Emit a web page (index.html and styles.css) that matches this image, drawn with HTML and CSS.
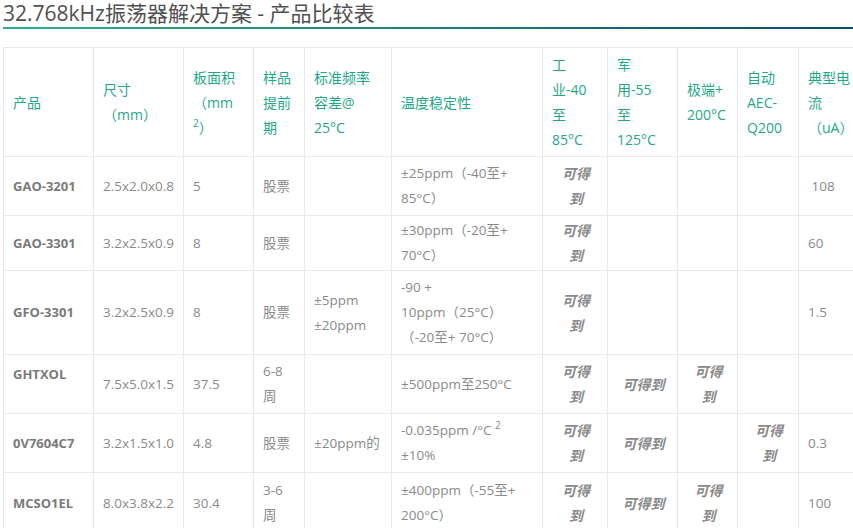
FILE: index.html
```html
<!DOCTYPE html>
<html lang="zh">
<head>
<meta charset="utf-8">
<title>32.768kHz振荡器解决方案 - 产品比较表</title>
<link rel="stylesheet" href="styles.css">
</head>
<body>
<div class="page">
  <h1 class="title">32.768kHz振荡器解决方案 - 产品比较表</h1>
  <div class="rule"></div>
  <table class="cmp">
    <colgroup>
      <col class="c1"><col class="c2"><col class="c3"><col class="c4"><col class="c5"><col class="c6">
      <col class="c7"><col class="c8"><col class="c9"><col class="c10"><col class="c11">
    </colgroup>
    <thead>
      <tr class="rh">
        <th>产品</th>
        <th>尺寸<br>（mm）</th>
        <th>板面积<br>（mm<br><sup>2</sup>）</th>
        <th>样品<br>提前<br>期</th>
        <th>标准频率<br>容差@<br>25°C</th>
        <th>温度稳定性</th>
        <th>工<br>业-40<br>至<br>85°C</th>
        <th>军<br>用-55<br>至<br>125°C</th>
        <th>极端+<br>200°C</th>
        <th>自动<br>AEC-<br>Q200</th>
        <th>典型电<br>流<br>（uA）</th>
      </tr>
    </thead>
    <tbody>
      <tr class="r1">
        <td class="pn">GAO-3201</td>
        <td>2.5x2.0x0.8</td>
        <td>5</td>
        <td>股票</td>
        <td></td>
        <td>±25ppm（-40至+<br>85°C）</td>
        <td class="av">可得<br>到</td>
        <td></td><td></td><td></td>
        <td>&nbsp;108</td>
      </tr>
      <tr class="r2">
        <td class="pn">GAO-3301</td>
        <td>3.2x2.5x0.9</td>
        <td>8</td>
        <td>股票</td>
        <td></td>
        <td>±30ppm（-20至+<br>70°C）</td>
        <td class="av">可得<br>到</td>
        <td></td><td></td><td></td>
        <td>60</td>
      </tr>
      <tr class="r3">
        <td class="pn">GFO-3301</td>
        <td>3.2x2.5x0.9</td>
        <td>8</td>
        <td>股票</td>
        <td>±5ppm<br>±20ppm</td>
        <td>-90 +<br>10ppm（25°C）<br>（-20至+ 70°C）</td>
        <td class="av">可得<br>到</td>
        <td></td><td></td><td></td>
        <td>1.5</td>
      </tr>
      <tr class="r4">
        <td class="pn up">GHTXOL</td>
        <td>7.5x5.0x1.5</td>
        <td>37.5</td>
        <td>6-8<br>周</td>
        <td></td>
        <td>±500ppm至250°C</td>
        <td class="av">可得<br>到</td>
        <td class="av">可得到</td>
        <td class="av">可得<br>到</td>
        <td></td>
        <td></td>
      </tr>
      <tr class="r5">
        <td class="pn">0V7604C7</td>
        <td>3.2x1.5x1.0</td>
        <td>4.8</td>
        <td>股票</td>
        <td>±20ppm的</td>
        <td>-0.035ppm /°C <sup>2</sup><br>±10%</td>
        <td class="av">可得<br>到</td>
        <td class="av">可得到</td>
        <td></td>
        <td class="av">可得<br>到</td>
        <td>0.3</td>
      </tr>
      <tr class="r6">
        <td class="pn">MCSO1EL</td>
        <td>8.0x3.8x2.2</td>
        <td>30.4</td>
        <td>3-6<br>周</td>
        <td></td>
        <td>±400ppm（-55至+<br>200°C）</td>
        <td class="av">可得<br>到</td>
        <td class="av">可得到</td>
        <td class="av">可得<br>到</td>
        <td></td>
        <td>100</td>
      </tr>
    </tbody>
  </table>
</div>
</body>
</html>
```
FILE: styles.css
```css
html, body {
  margin: 0;
  padding: 0;
  background: #fff;
  overflow: hidden;
}
.page {
  padding-left: 3px;
  font-family: "Open Sans", "Noto Sans CJK SC", sans-serif;
}
.title {
  margin: 0;
  font-size: 21px;
  line-height: 27px;
  font-weight: 400;
  color: #505050;
  white-space: nowrap;
}
.rule {
  height: 2px;
  background: linear-gradient(90deg, #2bb28a 0%, #1f8a85 40%, #0d4a6b 100%);
}
.cmp {
  margin-top: 18px;
  border-collapse: collapse;
  table-layout: fixed;
  width: 856px;
  font-size: 13.5px;
  line-height: 25px;
  color: #8a8a8a;
}
.c1 { width: 90px; }
.c2 { width: 90px; }
.c3 { width: 70px; }
.c4 { width: 51px; }
.c5 { width: 87px; }
.c6 { width: 151px; }
.c7 { width: 65px; }
.c8 { width: 70px; }
.c9 { width: 60px; }
.c10 { width: 61px; }
.c11 { width: 61px; }
.cmp th, .cmp td {
  border: 1px solid #e9e9e9;
  padding: 2px 0 2px 9px;
  text-align: left;
  vertical-align: middle;
  white-space: nowrap;
  overflow: hidden;
}
.cmp th {
  font-weight: 400;
  color: #1fa888;
  font-size: 14px;
}
.cmp sup {
  font-size: 10px;
  line-height: 0;
  vertical-align: 6px;
}
.rh { height: 109px; }
.r1 { height: 59px; }
.r2 { height: 55px; }
.r3 { height: 84px; }
.r4 { height: 59px; }
.r5 { height: 59px; }
.r6 { height: 61px; }
.cmp td.pn {
  font-weight: 700;
  color: #7a7a7a;
  font-size: 13px;
}
.cmp td.up {
  padding-bottom: 22px;
}
.cmp td.av {
  font-weight: 700;
  font-style: italic;
  text-align: center;
  padding: 2px 2px 2px 4px;
  font-size: 14px;
  color: #8a8a8a;
}
```
